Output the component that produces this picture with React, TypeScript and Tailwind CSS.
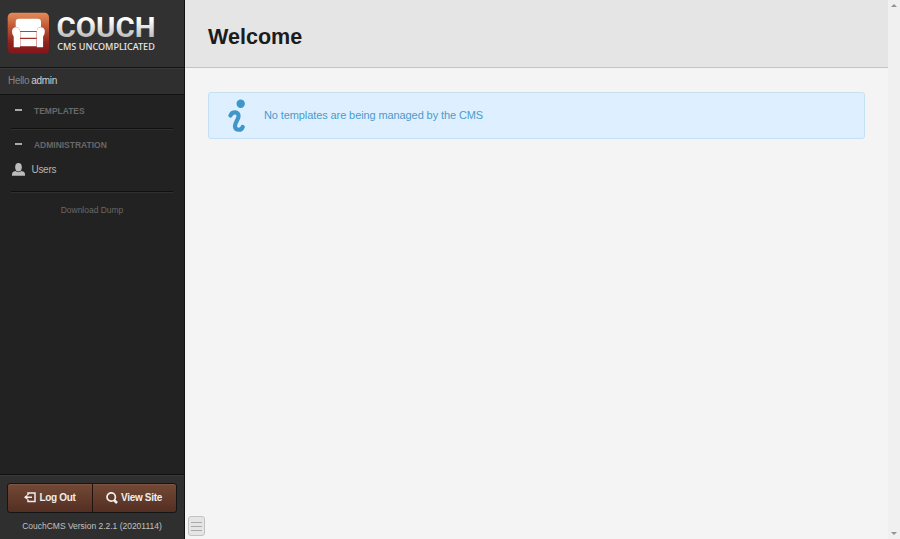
import React from "react";

function Logo() {
  return (
    <svg width="150" height="44" viewBox="0 0 150 44" className="block overflow-visible">
      <defs>
        <linearGradient id="badge" x1="0" y1="0" x2="0" y2="1">
          <stop offset="0" stopColor="#e58b59" />
          <stop offset="0.5" stopColor="#ad4228" />
          <stop offset="0.75" stopColor="#8e2020" />
          <stop offset="1" stopColor="#80171b" />
        </linearGradient>
        <linearGradient id="word" x1="0" y1="0" x2="0" y2="1">
          <stop offset="0.25" stopColor="#ffffff" />
          <stop offset="0.85" stopColor="#b5b5b5" />
        </linearGradient>
      </defs>
      <rect x="-0.3" y="0.7" width="41.3" height="41" rx="4.5" fill="url(#badge)" />
      <g fill="#fff">
        <path d="M11 6.700h18.700q3.300 0 3.300 3.300v4.700q-3.900.6-4.200 4.200H12q-.4-3.600-4.300-4.200V10q0-3.300 3.300-3.300z" />
        <path d="M8 15.200q3.900.2 4 4.500v15.500H5.700V24.500Q3.800 22.500 4 19q.4-3.800 4-3.800zM32.800 15.200q-3.900.2-4 4.500v15.500h6.300V24.500q1.900-2 1.700-5.500-.4-3.800-4-3.800z" />
        <path d="M12.300 20h16.200v5.800H12.300zM12.300 27h16.200v7.300H12.300z" />
      </g>
      <text x="48.500" y="24.700" fill="url(#word)" fontSize="27" fontWeight="700" fontFamily="Roboto, sans-serif" textLength="99" lengthAdjust="spacingAndGlyphs">COUCH</text>
      <text x="49.300" y="37.500" fill="#e8e8e8" fontSize="9.300" fontWeight="500" fontFamily="'Noto Sans', sans-serif" textLength="97.500" lengthAdjust="spacingAndGlyphs">CMS UNCOMPLICATED</text>
    </svg>
  );
}

function Divider() {
  return <div className="mx-[11px] h-[2px] border-t border-[#101010] bg-[#303030]" />;
}

function Section({ children }: { children: React.ReactNode }) {
  return (
    <div className="flex items-center pl-[15px] text-[8.470px] font-bold leading-[12px] text-[#686868]">
      <span className="mb-[2px] mr-[12px] h-[2px] w-[7px] bg-[#aaa]" />
      {children}
    </div>
  );
}

function Sidebar() {
  return (
    <aside className="flex w-[185px] shrink-0 flex-col border-r border-[#111] bg-[#222]">
      <div className="h-[67px] bg-[#313131] pl-[8px] pt-[12px]"><Logo /></div>
      <div className="flex h-[28px] items-center gap-[2px] border-y border-[#131313] bg-[#2f2f2f] pb-[2px] pl-[8px] text-[10px] tracking-[-0.300px] text-[#858585] shadow-[inset_0_1px_0_#3a3a3a]">
        Hello <span className="text-[#d0d0d0]">admin</span>
      </div>
      <nav className="flex-1">
        <div className="h-[33px] pt-[10px]"><Section>TEMPLATES</Section></div>
        <Divider />
        <div className="h-[27px] pt-[9px]"><Section>ADMINISTRATION</Section></div>
        <div className="flex h-[34px] items-center gap-[6.500px] pb-[10px] pl-[12px] text-[10px] tracking-[-0.300px] text-[#b5b5b5]">
          <svg width="13" height="13" viewBox="0 0 13 13" fill="#bcbcbc">
            <ellipse cx="6.500" cy="4.200" rx="3.300" ry="4.200" />
            <path d="M0 12.700v-2Q0 9 3.300 8.100q3.200 2.100 6.400 0Q13 9 13 10.700v2z" />
          </svg>
          Users
        </div>
        <Divider />
        <div className="pt-[11px] text-center text-[8.470px] leading-[12px] text-[#686868]">Download Dump</div>
      </nav>
      <footer className="h-[65px] border-t border-[#111] bg-[#2f2f2f] px-[7px] pt-[8px] shadow-[inset_0_1px_0_#383838]">
        <div className="flex h-[30px] w-[170px] rounded-[3px] border border-[#151515] bg-gradient-to-b from-[#744936] to-[#532f22] text-[10px] font-bold tracking-[-0.300px] text-[#eee] shadow-[inset_0_1px_0_#7c5340]">
          <div className="flex w-[85px] items-center justify-center gap-[3px] border-r border-[#21140f] pb-px">
            <svg width="12" height="11" viewBox="0 0 12 11" fill="none" stroke="#eee" strokeWidth="1.500">
              <path d="M4 3V1h7v8.500H4v-2M1 5.200h7" /><path d="M0 5.200 3.500 2.500v5.400z" fill="#eee" stroke="none" />
            </svg>
            Log Out
          </div>
          <div className="flex flex-1 items-center justify-center gap-[3px] pb-px pr-px">
            <svg width="12" height="12" viewBox="0 0 12 12" fill="none" stroke="#eee">
              <circle cx="5.200" cy="5" r="4.200" strokeWidth="1.700" /><path d="m8 8 3 3" strokeWidth="2.700" />
            </svg>
            View Site
          </div>
        </div>
        <div className="pt-[7px] text-center text-[8.470px] leading-[12px] text-[#c2c2c2]">CouchCMS Version 2.2.1 (20201114)</div>
      </footer>
    </aside>
  );
}

export default function App() {
  return (
    <div className="flex h-[539px] w-[900px] overflow-hidden whitespace-nowrap bg-[#f4f4f4] font-['Liberation_Sans',Arial,sans-serif]">
      <Sidebar />
      <main className="flex w-[703px] flex-col">
        <header className="h-[68px] border-b border-[#c4c4c4] bg-[#e5e5e5] pl-[23px] pt-[23px]">
          <h1 className="text-[21.560px] font-bold leading-[28px] text-[#1c1c1c]">Welcome</h1>
        </header>
        <div className="flex-1 px-[23px] pt-[24px]">
          <div className="flex h-[47px] items-center rounded-[3px] border border-[#c4e0f5] bg-[#def0ff] pl-[19px] text-[11px] tracking-[-0.100px] text-[#4b9bcb]">
            <svg width="18" height="34" viewBox="0 0 18 34" className="mr-[18px]">
              <circle cx="12.700" cy="4.800" r="4.200" fill="#4096c9" />
              <path d="M2.500 16.500C4 12.500 11 12 10.500 17.500c-.3 3.500-4 6.500-3.500 10C7.500 32 13.500 31.500 14.700 28" fill="none" stroke="#4096c9" strokeWidth="4.200" strokeLinecap="round" />
            </svg>
            No templates are being managed by the CMS
          </div>
        </div>
        <div className="mb-[3px] ml-[3px] flex h-[20px] w-[17px] flex-col items-center justify-center gap-[3px] rounded-[3px] border border-[#c2c2c2] bg-[#e5e5e5]">
          <i className="h-px w-[11px] bg-[#aaa]" /><i className="h-px w-[11px] bg-[#aaa]" /><i className="h-px w-[11px] bg-[#aaa]" />
        </div>
      </main>
      <div className="flex flex-1 flex-col items-center justify-between bg-[#f0f0f0] pb-[4px] pt-[4px]">
        <svg width="6" height="3" viewBox="0 0 6 3"><path d="M0 3 3 0l3 3z" fill="#929292" /></svg>
        <svg width="6" height="3" viewBox="0 0 6 3"><path d="M0 0 3 3l3-3z" fill="#929292" /></svg>
      </div>
    </div>
  );
}
